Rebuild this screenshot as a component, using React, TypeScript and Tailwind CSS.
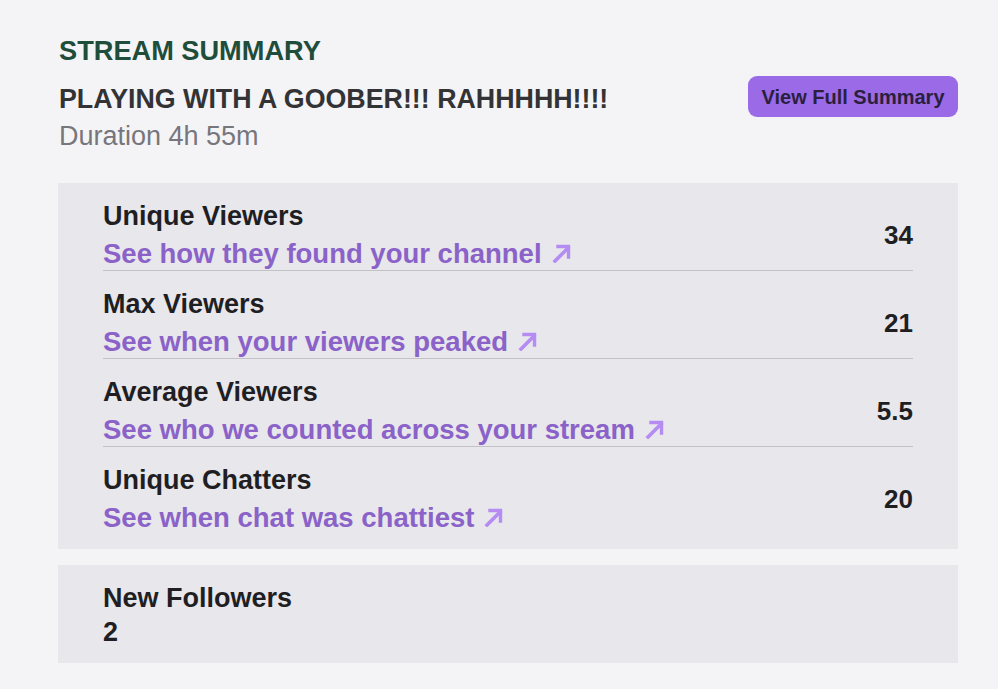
const stats = [
  { label: "Unique Viewers", link: "See how they found your channel", value: "34" },
  { label: "Max Viewers", link: "See when your viewers peaked", value: "21" },
  { label: "Average Viewers", link: "See who we counted across your stream", value: "5.5" },
  { label: "Unique Chatters", link: "See when chat was chattiest", value: "20" },
];

function ArrowUpRight() {
  return (
    <svg width="20" height="20" viewBox="0 0 20 20" fill="none" className="mb-[2px] shrink-0">
      <path d="M3 18 L16 5" stroke="#b48cf2" strokeWidth="3.6" strokeLinecap="square" />
      <path d="M6 3.5 H16.5 V14" stroke="#b48cf2" strokeWidth="3.4" strokeLinecap="square" />
    </svg>
  );
}

export default function App() {
  return (
    <div className="min-h-screen bg-[#f4f4f6] pl-[58px] pr-[40px] pt-[35px] font-['Liberation_Sans',Arial,sans-serif]">
      <h2 className="pl-px text-[27.2px] font-bold leading-[32px] text-[#1f4d3b]">STREAM SUMMARY</h2>
      <div className="mt-[9px] flex items-center justify-between">
        <h1 className="pl-px text-[26.8px] font-bold leading-[32px] text-[#333336]">
          PLAYING WITH A GOOBER!!! RAHHHHH!!!!
        </h1>
        <button className="mb-[5px] h-[41px] w-[210px] rounded-[9px] bg-[#9b6ae6] text-[20px] font-bold text-[#2b1f3e]">
          View Full Summary
        </button>
      </div>
      <p className="-mt-[2px] pl-px text-[27px] leading-[32px] text-[#77767c]">Duration 4h 55m</p>

      <div className="mt-[31px] bg-[#e8e7ec] px-[45px] pb-[15px]">
        {stats.map((s, i) => (
          <div
            key={s.label}
            className={
              "flex items-center justify-between pt-[17px] " +
              (i < stats.length - 1 ? "border-b border-[#c2c1c6]" : "")
            }
          >
            <div className="flex flex-col gap-[6px]">
              <div className="text-[27px] font-bold leading-[32px] text-[#1f1f23]">{s.label}</div>
              <div className="flex items-center gap-[10px] text-[27.5px] font-bold leading-[32px] text-[#8a62c8]">
                <span>{s.link}</span>
                <ArrowUpRight />
              </div>
            </div>
            <div className="text-[26px] font-bold text-[#1f1f23]">{s.value}</div>
          </div>
        ))}
      </div>

      <div className="mt-[16px] flex flex-col gap-[2px] bg-[#e8e7ec] px-[45px] pt-[17px] pb-[15px]">
        <div className="text-[27px] font-bold leading-[32px] text-[#1f1f23]">New Followers</div>
        <div className="text-[27px] font-bold leading-[32px] text-[#1f1f23]">2</div>
      </div>
    </div>
  );
}
